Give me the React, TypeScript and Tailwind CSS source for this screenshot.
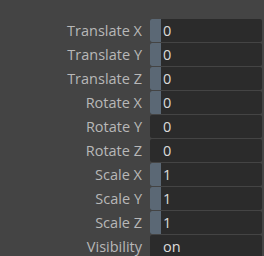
import React from "react";

const rows: { label: string; value: string; strip: boolean }[] = [
  { label: "Translate X", value: "0", strip: true },
  { label: "Translate Y", value: "0", strip: true },
  { label: "Translate Z", value: "0", strip: true },
  { label: "Rotate X", value: "0", strip: true },
  { label: "Rotate Y", value: "0", strip: false },
  { label: "Rotate Z", value: "0", strip: false },
  { label: "Scale X", value: "1", strip: true },
  { label: "Scale Y", value: "1", strip: true },
  { label: "Scale Z", value: "1", strip: true },
  { label: "Visibility", value: "on", strip: false },
];

export default function App() {
  return (
    <div
      className="w-[264px] h-[256px] overflow-hidden bg-[#444444] pt-[19px] flex flex-col gap-px"
      style={{ fontFamily: '"Open Sans", "Noto Sans", sans-serif' }}
    >
      {rows.map((r) => (
        <div key={r.label} className="flex h-[23px] shrink-0 items-stretch">
          <div className="w-[142px] flex items-center justify-end text-[14.5px] text-[#b8b8b8] leading-none pt-[2px]">
            {r.label}
          </div>
          <div className="ml-[8px] mr-[2px] flex-1 flex bg-[#2b2b2b] rounded-[2px] overflow-hidden">
            {r.strip ? (
              <div className="w-[11px] bg-[#5b6875]" />
            ) : (
              <div className="w-[11px]" />
            )}
            <div className="pl-[2px] flex items-center text-[14.5px] text-[#dcdcdc] leading-none pt-[2px]">
              {r.value}
            </div>
          </div>
        </div>
      ))}
    </div>
  );
}
